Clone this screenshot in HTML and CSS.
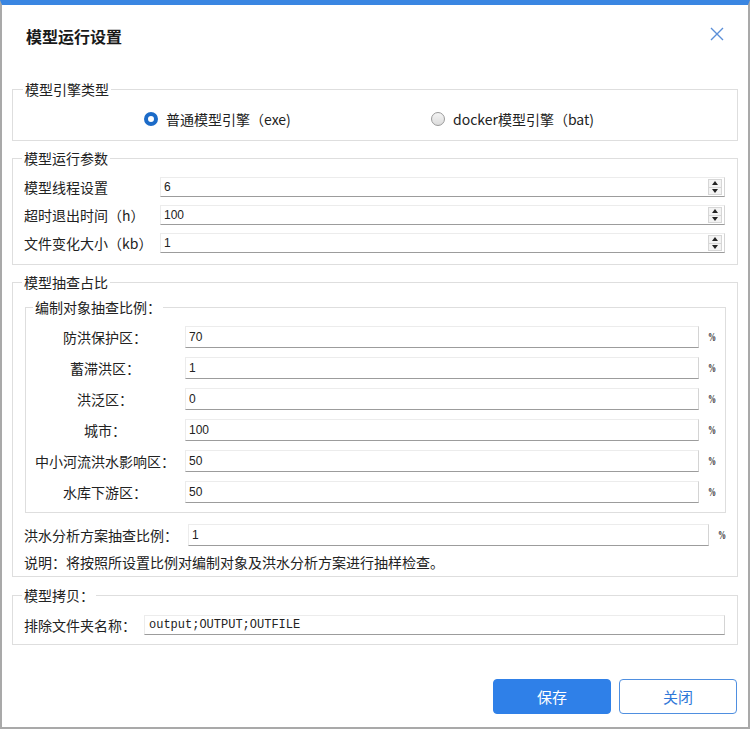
FILE: index.html
```html
<!DOCTYPE html>
<html lang="zh-CN">
  <head>
    <meta charset="UTF-8" />
    <meta name="viewport" content="width=device-width, initial-scale=1.0" />
    <title>模型运行设置</title>
    <link rel="stylesheet" href="styles.css">
  </head>
  <body>
    <div class="dialog">
      <div class="head">
        <h1>模型运行设置</h1>
        <span class="close">
          <svg width="14" height="14" viewBox="0 0 14 14">
            <path d="M1 1 L13 13 M13 1 L1 13" stroke="#5b8fd8" stroke-width="1.4" fill="none" />
          </svg>
        </span>
      </div>

      <div class="body">
        <fieldset class="group engine">
          <legend>模型引擎类型</legend>
          <div class="radios">
            <label class="radio"><span class="dot checked"></span>普通模型引擎（exe)</label>
            <label class="radio"><span class="dot"></span>docker模型引擎（bat)</label>
          </div>
        </fieldset>

        <fieldset class="group params">
          <legend>模型运行参数</legend>
          <div class="row">
            <span class="label">模型线程设置</span>
            <div class="field"><input type="text" value="6" /><span class="spin"><i class="up"></i><i class="down"></i></span></div>
          </div>
          <div class="row">
            <span class="label">超时退出时间（h）</span>
            <div class="field"><input type="text" value="100" /><span class="spin"><i class="up"></i><i class="down"></i></span></div>
          </div>
          <div class="row">
            <span class="label">文件变化大小（kb）</span>
            <div class="field"><input type="text" value="1" /><span class="spin"><i class="up"></i><i class="down"></i></span></div>
          </div>
        </fieldset>

        <fieldset class="group ratio">
          <legend>模型抽查占比</legend>
          <fieldset class="inner">
            <legend>编制对象抽查比例：</legend>
            <div class="row tall">
              <span class="label center">防洪保护区：</span>
              <div class="field"><input type="text" value="70" /></div>
              <span class="pct">%</span>
            </div>
            <div class="row tall">
              <span class="label center">蓄滞洪区：</span>
              <div class="field"><input type="text" value="1" /></div>
              <span class="pct">%</span>
            </div>
            <div class="row tall">
              <span class="label center">洪泛区：</span>
              <div class="field"><input type="text" value="0" /></div>
              <span class="pct">%</span>
            </div>
            <div class="row tall">
              <span class="label center">城市：</span>
              <div class="field"><input type="text" value="100" /></div>
              <span class="pct">%</span>
            </div>
            <div class="row tall">
              <span class="label center">中小河流洪水影响区：</span>
              <div class="field"><input type="text" value="50" /></div>
              <span class="pct">%</span>
            </div>
            <div class="row tall">
              <span class="label center">水库下游区：</span>
              <div class="field"><input type="text" value="50" /></div>
              <span class="pct">%</span>
            </div>
          </fieldset>
          <div class="row plan">
            <span class="label">洪水分析方案抽查比例：</span>
            <div class="field"><input type="text" value="1" /></div>
            <span class="pct">%</span>
          </div>
          <p class="note">说明：将按照所设置比例对编制对象及洪水分析方案进行抽样检查。</p>
        </fieldset>

        <fieldset class="group copy">
          <legend>模型拷贝：</legend>
          <div class="row">
            <span class="label">排除文件夹名称：</span>
            <div class="field"><input class="mono" type="text" value="output;OUTPUT;OUTFILE" /></div>
          </div>
        </fieldset>

        <div class="footer">
          <button class="btn primary">保存</button>
          <button class="btn">关闭</button>
        </div>
      </div>
    </div>
  </body>
</html>
```

FILE: styles.css
```css
body {
  margin: 0;
  padding: 0;
  background: #fff;
  font-family: "Noto Sans CJK SC", "Noto Sans", sans-serif;
  font-size: 14px;
  color: #222;
}
.dialog {
  box-sizing: border-box;
  width: 750px;
  height: 729px;
  background: #fff;
  border: 2px solid #a9a9a9;
  border-top: 5px solid #3a86e2;
}
.head {
  display: flex;
  align-items: center;
  justify-content: space-between;
  padding: 19px 24px 31px 24px;
}
.head h1 {
  margin: 0;
  font-size: 16px;
  line-height: 24px;
  font-weight: bold;
  color: #1a1a1a;
}
.close {
  display: flex;
  margin-top: -4px;
}
.body {
  padding: 0 10px;
}

/* group boxes */
fieldset {
  margin: 0;
  min-width: 0;
  border: 1px solid #dedede;
}
legend {
  padding: 0 2px;
  margin-left: -2px;
  line-height: 20px;
  color: #222;
}
.group {
  padding: 5px 12px 7px 11px;
  margin-top: 7px;
}
.engine {
  margin-top: 0;
  padding-top: 10px;
  padding-bottom: 11px;
}
.engine legend {
  margin-left: -1px;
}
.ratio {
  padding-bottom: 3px;
}
.copy {
  margin-top: 8px;
  padding-top: 6px;
  padding-bottom: 5px;
}
.inner {
  margin: 0 -1px 0 1px;
  padding: 4px 10px 5px 9px;
}

/* engine radios */
.radios {
  display: grid;
  grid-template-columns: 287px auto;
  padding-left: 120px;
  height: 20px;
  align-items: center;
}
.radio {
  display: flex;
  align-items: center;
  gap: 8px;
  line-height: 20px;
}
.dot {
  box-sizing: border-box;
  width: 14px;
  height: 14px;
  border-radius: 50%;
  border: 1px solid #9a9a9a;
  background: linear-gradient(#f4f4f4, #dcdcdc);
}
.dot.checked {
  border: 4px solid #1c6bc8;
  background: #fff;
}

/* form rows */
.row {
  display: flex;
  align-items: center;
  height: 28px;
}
.row.tall {
  height: 31px;
}
.row.plan {
  margin-top: 8px;
}
.label {
  white-space: nowrap;
  flex: none;
}
.params .label {
  width: 136px;
}
.inner .label {
  width: 140px;
  margin-right: 10px;
  text-align: center;
}
.plan .label {
  width: 164px;
}
.copy .label {
  width: 120px;
}
.field {
  flex: 1;
  display: flex;
  align-items: center;
  height: 20px;
  background: #fff;
  border: 1px solid #ececec;
  border-right-color: #d4d4d4;
  border-bottom-color: #9c9c9c;
  box-sizing: border-box;
}
.inner .field,
.plan .field {
  height: 22px;
}
.field input {
  flex: 1;
  min-width: 0;
  border: none;
  outline: none;
  padding: 0 3px;
  font-family: "Liberation Sans", Arial, sans-serif;
  font-size: 12px;
  color: #222;
  background: transparent;
}
.field input.mono {
  font-family: "Liberation Mono", monospace;
  padding-left: 4px;
}
.spin {
  display: flex;
  flex-direction: column;
  width: 14px;
  height: 16px;
  margin-right: 2px;
  border: 1px solid #d6d6d6;
  background: #f3f3f3;
  box-sizing: border-box;
}
.spin i {
  flex: 1;
  display: flex;
  align-items: center;
  justify-content: center;
}
.spin i::before {
  content: "";
  border-left: 3px solid transparent;
  border-right: 3px solid transparent;
}
.spin .up {
  border-bottom: 1px solid #d6d6d6;
}
.spin .up::before {
  border-bottom: 4px solid #222;
}
.spin .down::before {
  border-top: 4px solid #222;
}
.pct {
  flex: none;
  width: 7px;
  margin-left: 9px;
  font-family: "Liberation Serif", serif;
  font-size: 13px;
  font-weight: bold;
  color: #333;
  transform: scaleX(0.62);
  transform-origin: left center;
}
.note {
  margin: 2px 0 0;
  line-height: 22px;
}

/* buttons */
.footer {
  display: flex;
  justify-content: flex-end;
  gap: 8px;
  margin-top: 34px;
  padding-right: 1px;
}
.btn {
  width: 118px;
  height: 35px;
  border: 1px solid #4f8fe0;
  border-radius: 4px;
  background: #fff;
  color: #2f78d8;
  font-family: "Noto Sans CJK SC", sans-serif;
  font-size: 15px;
  cursor: pointer;
}
.btn.primary {
  background: #2f80e8;
  border-color: #2f80e8;
  color: #fff;
}
```
